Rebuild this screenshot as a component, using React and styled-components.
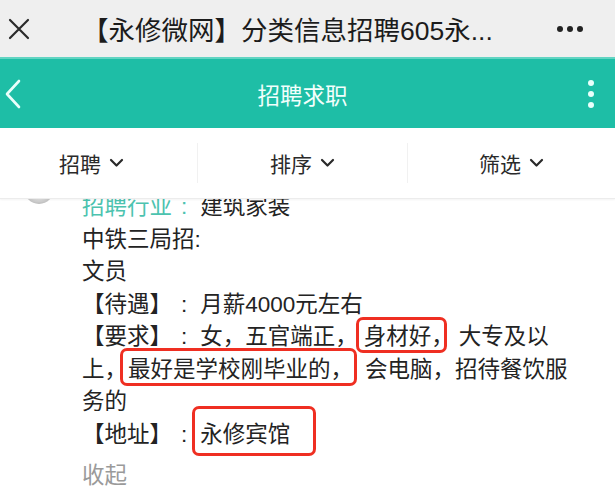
import React from 'react';
import styled, { createGlobalStyle } from 'styled-components';

const GlobalStyle = createGlobalStyle`
  html, body {
    margin: 0;
    padding: 0;
    background: #fff;
  }
  body {
    font-family: "Liberation Sans", "Noto Sans CJK SC", sans-serif;
  }
`;

const Page = styled.div`
  width: 615px;
  height: 494px;
  overflow: hidden;
  display: flex;
  flex-direction: column;
  background: #fff;
`;

const TopBar = styled.header`
  height: 57px;
  flex: none;
  background: #efefef;
  display: grid;
  grid-template-columns: 82px 1fr 64px;
  align-items: center;
`;

const CloseBtn = styled.div`
  padding-left: 8px;
  display: flex;
  align-items: center;
  color: #2a2a2a;
`;

const PageTitle = styled.div`
  font-size: 26.5px;
  color: #1c1c1c;
  white-space: nowrap;
  overflow: hidden;
`;

const MoreDots = styled.div`
  display: flex;
  align-items: center;
  color: #222;
  padding-left: 5px;
`;

const NavBar = styled.nav`
  height: 71px;
  flex: none;
  background: #1ebea6;
  border-top: 2px solid #62d4c2;
  box-sizing: border-box;
  display: grid;
  grid-template-columns: 60px 1fr 60px;
  align-items: center;
`;

const NavBack = styled.div`
  padding-left: 4px;
  display: flex;
  align-items: center;
`;

const NavTitle = styled.h1`
  margin: 0 10px 0 0;
  text-align: center;
  font-size: 22.5px;
  font-weight: normal;
  color: #f2fffc;
`;

const NavMenu = styled.div`
  display: flex;
  justify-content: center;
  padding-left: 12px;
`;

const FilterBar = styled.div`
  height: 70px;
  flex: none;
  display: grid;
  grid-template-columns: 197px 210px 1fr;
  align-items: center;
  background: #fff;
  border-bottom: 1px solid #ececec;
  box-shadow: 0 1px 2px rgba(0, 0, 0, 0.05);
  position: relative;
  z-index: 2;
`;

const FilterItem = styled.div`
  height: 40px;
  display: flex;
  align-items: center;
  justify-content: center;
  gap: 8px;
  font-size: 21px;
  color: #2a2a2a;
  border-left: ${p => (p.$first ? 'none' : '1px solid #f1f1f1')};
  padding-right: ${p => p.$shift || 0}px;
`;

const Content = styled.main`
  flex: 1;
  overflow: hidden;
  position: relative;
`;

const Post = styled.article`
  display: grid;
  grid-template-columns: 82px 1fr;
  margin-top: -8px;
`;

const Avatar = styled.div`
  width: 30px;
  height: 30px;
  margin: -17px 0 0 24px;
  border-radius: 50%;
  background: radial-gradient(circle at 50% 30%, #f4f4f4 0%, #e2e2e2 60%, #9a9a9a 100%);
`;

const Body = styled.div`
  font-size: 22.5px;
  line-height: 32.5px;
  color: #232323;
  white-space: nowrap;
`;

const Line = styled.div``;

const Label = styled.span`
  color: #4cc3af;
`;

const Colon = styled.span`
  margin: 0 13px 0 9px;
`;

const Mark = styled.span`
  position: relative;
  margin-left: ${p => p.$ml}px;
  margin-right: ${p => p.$mr}px;

  &::after {
    content: '';
    position: absolute;
    top: ${p => p.$t}px;
    bottom: ${p => p.$b}px;
    left: ${p => p.$l}px;
    right: ${p => p.$r}px;
    border: 3px solid #ef2f22;
    border-radius: 7px;
    pointer-events: none;
  }
`;

const Collapse = styled.div`
  margin-top: 9px;
  color: #9a9a9a;
`;

const App = () => (
  <>
    <GlobalStyle />
    <Page>
      <TopBar>
        <CloseBtn>
          <svg width="22" height="22" viewBox="0 0 22 22">
            <path d="M2 2 L20 20 M20 2 L2 20" stroke="currentColor" strokeWidth="2.2" strokeLinecap="round" />
          </svg>
        </CloseBtn>
        <PageTitle>【永修微网】分类信息招聘605永...</PageTitle>
        <MoreDots>
          <svg width="30" height="8" viewBox="0 0 30 8">
            <circle cx="4" cy="4" r="3" fill="currentColor" />
            <circle cx="14" cy="4" r="3" fill="currentColor" />
            <circle cx="24" cy="4" r="3" fill="currentColor" />
          </svg>
        </MoreDots>
      </TopBar>

      <NavBar>
        <NavBack>
          <svg width="18" height="30" viewBox="0 0 18 30">
            <path d="M15 2 L3 15 L15 28" fill="none" stroke="#eafffb" strokeWidth="2.6" strokeLinecap="round" strokeLinejoin="round" />
          </svg>
        </NavBack>
        <NavTitle>招聘求职</NavTitle>
        <NavMenu>
          <svg width="8" height="30" viewBox="0 0 8 30">
            <circle cx="4" cy="4" r="3" fill="#eafffb" />
            <circle cx="4" cy="15" r="3" fill="#eafffb" />
            <circle cx="4" cy="26" r="3" fill="#eafffb" />
          </svg>
        </NavMenu>
      </NavBar>

      <FilterBar>
        {['招聘', '排序', '筛选'].map((t, i) => (
          <FilterItem key={t} $first={i === 0} $shift={i === 0 ? 14 : 0}>
            {t}
            <svg width="15" height="10" viewBox="0 0 15 10">
              <path d="M2 2 L7.5 7.5 L13 2" fill="none" stroke="#2a2a2a" strokeWidth="2.2" strokeLinecap="round" strokeLinejoin="round" />
            </svg>
          </FilterItem>
        ))}
      </FilterBar>

      <Content>
        <Post>
          <Avatar />
          <Body>
            <Line>
              <Label>招聘行业<Colon>:</Colon></Label>建筑家装
            </Line>
            <Line>中铁三局招:</Line>
            <Line>文员</Line>
            <Line>
              【待遇】<Colon>:</Colon>月薪4000元左右
            </Line>
            <Line>
              【要求】<Colon>:</Colon>女，五官端正，
              <Mark $ml={6} $mr={5} $t={-7} $b={-4} $l={-8} $r={7}>身材好，</Mark>
              大专及以
            </Line>
            <Line>
              上，
              <Mark $ml={1} $mr={12} $t={-9} $b={-4} $l={-8} $r={-4}>最好是学校刚毕业的，</Mark>
              会电脑，招待餐饮服
            </Line>
            <Line>务的</Line>
            <Line>
              【地址】<Colon>:</Colon>
              <Mark $ml={0} $mr={0} $t={-16} $b={-9} $l={-8} $r={-26}>永修宾馆</Mark>
            </Line>
            <Collapse>收起</Collapse>
          </Body>
        </Post>
      </Content>
    </Page>
  </>
);

export default App;
